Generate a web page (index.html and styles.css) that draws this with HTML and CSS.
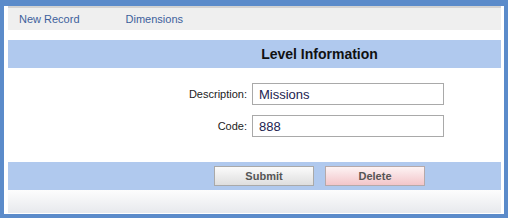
FILE: index.html
```html
<!DOCTYPE html>
<html lang="en">
<head>
    <meta charset="UTF-8">
    <title>Level Information</title>
    <link rel="stylesheet" href="styles.css">
</head>
<body>
    <div class="frame">
        <div class="toolbar">
            <a class="tool-item first" href="#">New Record</a>
            <a class="tool-item" href="#">Dimensions</a>
        </div>

        <div class="panel-header">Level Information</div>

        <form class="level-form">
            <label for="description">Description:</label>
            <input type="text" id="description" value="Missions">
            <label for="code">Code:</label>
            <input type="text" id="code" value="888">
        </form>

        <div class="button-bar">
            <div class="button submit">Submit</div>
            <div class="button delete">Delete</div>
        </div>

        <div class="footer"></div>
    </div>
</body>
</html>
```

FILE: styles.css
```css
html, body {
    margin: 0;
    padding: 0;
    background-color: #ffffff;
    font-family: "Liberation Sans", Arial, sans-serif;
}
.frame {
    width: 508px;
    height: 218px;
    box-sizing: border-box;
    border: 4px solid #5b8bca;
    border-top-width: 6px;
    padding: 0 3px 1px 4px;
    background-color: #ffffff;
    display: flex;
    flex-direction: column;
}
.toolbar {
    height: 22px;
    border-top: 2px solid #d2d2d2;
    background-color: #efefef;
    display: flex;
    align-items: center;
}
.tool-item {
    font-size: 11px;
    color: #3d5f9c;
    text-decoration: none;
    padding: 0 11px;
}
.tool-item.first {
    margin-right: 24px;
}
.panel-header {
    margin-top: 10px;
    height: 28px;
    line-height: 28px;
    background-color: #b0c9ee;
    padding-left: 130px;
    text-align: center;
    font-size: 14px;
    font-weight: bold;
    color: #111111;
}
.level-form {
    margin: 0;
    height: 94px;
    box-sizing: border-box;
    padding-top: 15px;
    display: grid;
    grid-template-columns: 239px 192px;
    grid-auto-rows: 22px;
    column-gap: 5px;
    row-gap: 10px;
    align-items: center;
}
.level-form label {
    text-align: right;
    font-size: 11px;
    color: #222222;
}
.level-form input {
    width: 192px;
    height: 22px;
    box-sizing: border-box;
    border: 1px solid #a9a9a9;
    padding: 0 5px 0 6px;
    margin: 0;
    font-family: "Liberation Sans", Arial, sans-serif;
    font-size: 13px;
    color: #1c2350;
    outline: none;
}
.button-bar {
    height: 28px;
    background-color: #b0c9ee;
    padding-left: 130px;
    display: flex;
    justify-content: center;
    align-items: center;
    gap: 11px;
}
.button {
    width: 100px;
    height: 20px;
    box-sizing: border-box;
    line-height: 18px;
    text-align: center;
    font-size: 11px;
    font-weight: bold;
    color: #555555;
    border: 1px solid #a9a9a9;
}
.button.submit {
    background: linear-gradient(#fbfbfb, #dedede);
}
.button.delete {
    border-color: #b5a9aa;
    background: linear-gradient(#fdf3f4, #f3c5c9);
}
.footer {
    flex: 1;
    background: linear-gradient(#fdfdfd, #e7e9ed);
}
```
